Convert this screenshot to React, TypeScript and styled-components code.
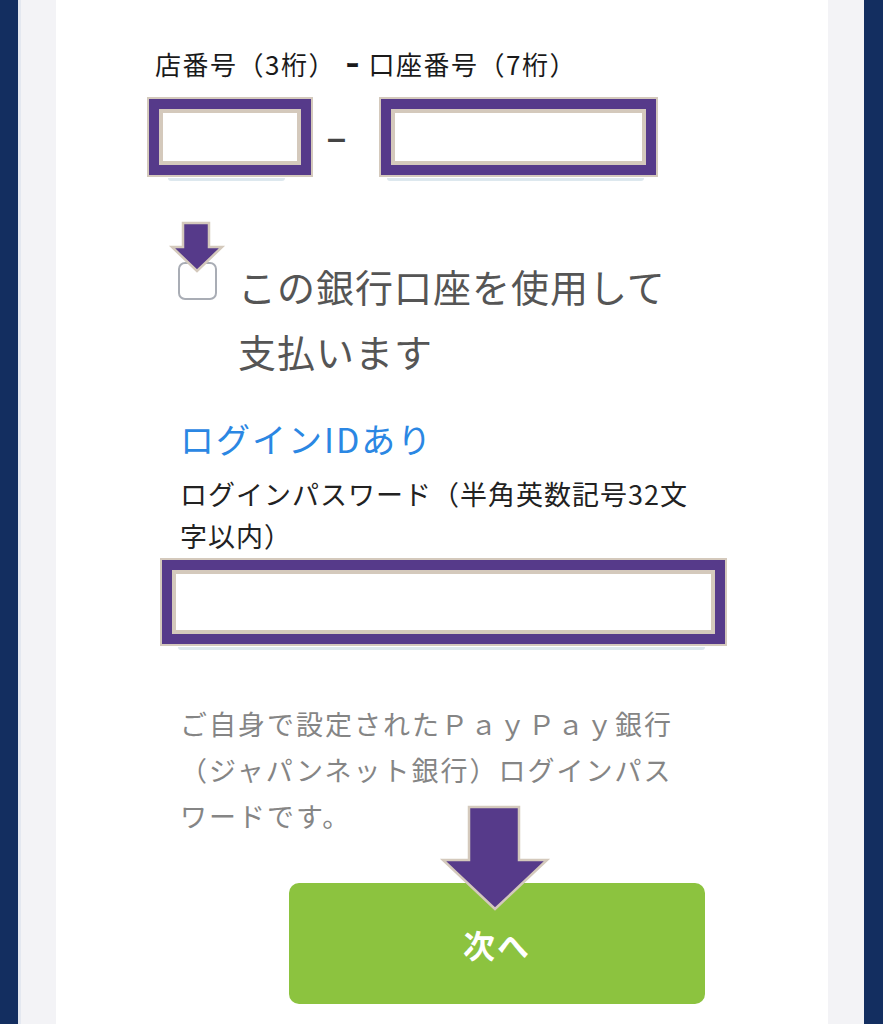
import React from 'react'
import styled, { createGlobalStyle } from 'styled-components'

const GlobalStyle = createGlobalStyle`
    html, body {
        margin: 0;
        padding: 0;
    }
    body {
        font-family: 'Noto Sans CJK JP', 'Noto Sans', sans-serif;
        background: #132e60;
    }
`

const PURPLE = '#563a8a'
const BEIGE = '#d4c9bc'

const Frame = styled.div`
    min-height: 1024px;
    display: flex;
    background: #132e60;
    padding: 0 19px 0 18px;
    overflow: hidden;
`

const Gutter = styled.div`
    flex: 1;
    display: flex;
    background: #f3f3f6;
    border-left: 3px solid #e4e8f0;
    padding: 0 36px 0 35px;
`

const Card = styled.main`
    flex: 1;
    background: #fff;
    padding: 48px 0 0 91px;
    display: flex;
    flex-direction: column;
    align-items: flex-start;
`

const FieldLabel = styled.div`
    margin-left: 8px;
    font-size: 26px;
    line-height: 32px;
    font-weight: 400;
    letter-spacing: 1.5px;
    color: #1a1a1a;
`

const Joiner = styled.span`
    margin: 0 8px 0 10px;
    font-weight: 700;
`

const FieldRow = styled.div`
    display: flex;
    align-items: flex-start;
    margin-top: 17px;
`

const FieldColumn = styled.div`
    display: flex;
    flex-direction: column;
`

const Highlight = styled.div<{ $w: number; $h: number }>`
    box-sizing: border-box;
    width: ${(p) => p.$w}px;
    height: ${(p) => p.$h}px;
    border: 2px solid ${BEIGE};
    background: ${PURPLE};
    padding: 10px;
    display: flex;
`

const Face = styled.div`
    flex: 1;
    border: 4px solid ${BEIGE};
    background: #fff;
`

const InputShadow = styled.div<{ $l: number; $r: number }>`
    height: 3px;
    margin: 1px ${(p) => p.$r}px 0 ${(p) => p.$l}px;
    background: #dde8ee;
    border-radius: 0 0 3px 3px;
`

const Dash = styled.span`
    height: 80px;
    line-height: 80px;
    margin: 0 33px 0 14px;
    font-family: 'Liberation Sans', sans-serif;
    font-size: 34px;
    font-weight: 700;
    color: #444;
`

const CheckRow = styled.label`
    display: flex;
    align-items: flex-start;
    gap: 21px;
    margin: 72px 0 0 31px;
`

const CheckWrap = styled.span`
    position: relative;
    flex: none;
    width: 39px;
    height: 38px;
    margin-top: 9px;
`

const CheckBox = styled.span`
    box-sizing: border-box;
    display: block;
    width: 100%;
    height: 100%;
    border: 2px solid #a9adb5;
    border-radius: 7px;
    background: #fff;
`

const Pointer = styled.svg<{ $left: number; $top: number }>`
    position: absolute;
    left: ${(p) => p.$left}px;
    top: ${(p) => p.$top}px;
    overflow: visible;
`

const CheckText = styled.span`
    font-size: 38px;
    line-height: 65px;
    letter-spacing: 1px;
    color: #555;
`

const LoginLink = styled.a`
    margin: 34px 0 0 33px;
    font-size: 34px;
    line-height: 44px;
    letter-spacing: 2px;
    color: #2b87e3;
    text-decoration: none;
`

const PasswordLabel = styled.div`
    margin: 12px 0 0 33px;
    font-size: 27px;
    line-height: 42px;
    letter-spacing: 1px;
    color: #222;
`

const PasswordField = styled(FieldColumn)`
    margin: 1px 0 0 13px;
`

const HelpText = styled.p`
    margin: 51px 0 0 33px;
    font-size: 27px;
    line-height: 46px;
    letter-spacing: 2px;
    color: #858585;
`

const NextButton = styled.button`
    position: relative;
    width: 416px;
    height: 121px;
    margin: 44px 0 0 142px;
    border: none;
    border-radius: 10px;
    background: #8cc33f;
    color: #fff;
    font-family: inherit;
    font-size: 32px;
    font-weight: 700;
    letter-spacing: 2px;
    cursor: pointer;
`

const DownArrow = ({ w, h, shaft, neck, left, top }: { w: number; h: number; shaft: [number, number]; neck: number; left: number; top: number }) => (
    <Pointer $left={left} $top={top} width={w} height={h} viewBox={`0 0 ${w} ${h}`}>
        <polygon
            points={`${shaft[0]},1 ${shaft[1]},1 ${shaft[1]},${neck} ${w - 1},${neck} ${w / 2},${h - 1} 1,${neck} ${shaft[0]},${neck}`}
            fill={PURPLE}
            stroke={BEIGE}
            strokeWidth="2.5"
            strokeLinejoin="miter"
        />
    </Pointer>
)

const App = () => (
    <>
        <GlobalStyle />
        <Frame>
            <Gutter>
                <Card>
                    <FieldLabel>
                        店番号（3桁）<Joiner>ｰ</Joiner>口座番号（7桁）
                    </FieldLabel>
                    <FieldRow>
                        <FieldColumn>
                            <Highlight $w={166} $h={80}>
                                <Face />
                            </Highlight>
                            <InputShadow $l={21} $r={28} />
                        </FieldColumn>
                        <Dash>–</Dash>
                        <FieldColumn>
                            <Highlight $w={279} $h={80}>
                                <Face />
                            </Highlight>
                            <InputShadow $l={8} $r={14} />
                        </FieldColumn>
                    </FieldRow>

                    <CheckRow>
                        <CheckWrap>
                            <CheckBox role="checkbox" aria-checked="false" />
                            <DownArrow w={52} h={50} shaft={[12, 38]} neck={25} left={-7} top={-40} />
                        </CheckWrap>
                        <CheckText>
                            この銀行口座を使用して
                            <br />
                            支払います
                        </CheckText>
                    </CheckRow>

                    <LoginLink href="#">ログインIDあり</LoginLink>
                    <PasswordLabel>
                        ログインパスワード（半角英数記号32文
                        <br />
                        字以内）
                    </PasswordLabel>
                    <PasswordField>
                        <Highlight $w={567} $h={88}>
                            <Face />
                        </Highlight>
                        <InputShadow $l={18} $r={22} />
                    </PasswordField>

                    <HelpText>
                        ご自身で設定されたＰａｙＰａｙ銀行
                        <br />
                        （ジャパンネット銀行）ログインパス
                        <br />
                        ワードです。
                    </HelpText>

                    <NextButton>
                        次へ
                        <DownArrow w={106} h={104} shaft={[27, 77]} neck={54} left={153} top={-77} />
                    </NextButton>
                </Card>
            </Gutter>
        </Frame>
    </>
)

export default App
